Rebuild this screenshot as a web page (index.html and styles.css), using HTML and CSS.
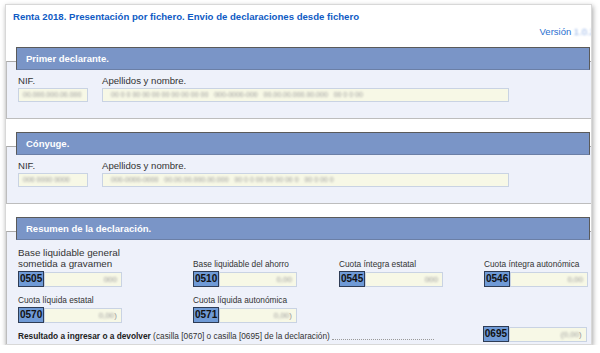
FILE: index.html
```html
<!DOCTYPE html>
<html lang="es">
<head>
    <meta charset="UTF-8">
    <title>Renta 2018. Presentación por fichero</title>
    <link rel="stylesheet" href="styles.css">
</head>
<body>
    <div class="marco">
        <div class="titulo">Renta 2018. Presentación por fichero. Envio de declaraciones desde fichero</div>
        <div class="version">Versión <span class="oculto">1.0.2</span></div>

        <div class="seccion">
            <div class="seccion-cab">Primer declarante.</div>
            <div class="seccion-cuerpo">
                <div class="fila-datos">
                    <div class="campo">
                        <label>NIF.</label>
                        <div class="caja caja-nif"><span class="oculto">00.000.000.00.000</span></div>
                    </div>
                    <div class="campo">
                        <label>Apellidos y nombre.</label>
                        <div class="caja caja-nombre"><span class="oculto">00 0 0 00 00 00 00 00 00 00 00 &nbsp; 000-0000-000 &nbsp; 00.00.00.000.00.000 &nbsp; 00 0 0 00</span></div>
                    </div>
                </div>
            </div>
        </div>

        <div class="seccion">
            <div class="seccion-cab">Cónyuge.</div>
            <div class="seccion-cuerpo">
                <div class="fila-datos">
                    <div class="campo">
                        <label>NIF.</label>
                        <div class="caja caja-nif"><span class="oculto">000 0000 0000</span></div>
                    </div>
                    <div class="campo">
                        <label>Apellidos y nombre.</label>
                        <div class="caja caja-nombre"><span class="oculto">000-0000-0000 &nbsp; 00.00.00.000.00.000 &nbsp; 00 0 0 00 00 00 00 0 &nbsp; 00 0 00 0</span></div>
                    </div>
                </div>
            </div>
        </div>

        <div class="seccion seccion-resumen">
            <div class="seccion-cab">Resumen de la declaración.</div>
            <div class="seccion-cuerpo">
                <div class="rejilla">
                    <div class="casilla">
                        <div class="etq etq-grande">Base liquidable general<br>sometida a gravamen</div>
                        <div class="importe"><span class="codigo">0505</span><span class="caja caja-imp"><span class="oculto">000</span></span></div>
                    </div>
                    <div class="casilla">
                        <div class="etq">Base liquidable del ahorro</div>
                        <div class="importe"><span class="codigo">0510</span><span class="caja caja-imp"><span class="oculto">0,00</span></span></div>
                    </div>
                    <div class="casilla">
                        <div class="etq">Cuota íntegra estatal</div>
                        <div class="importe"><span class="codigo">0545</span><span class="caja caja-imp"><span class="oculto">000</span></span></div>
                    </div>
                    <div class="casilla">
                        <div class="etq">Cuota íntegra autonómica</div>
                        <div class="importe"><span class="codigo">0546</span><span class="caja caja-imp"><span class="oculto">0,00</span></span></div>
                    </div>
                    <div class="casilla">
                        <div class="etq">Cuota líquida estatal</div>
                        <div class="importe"><span class="codigo">0570</span><span class="caja caja-imp"><span class="oculto">0,00</span>)</span></div>
                    </div>
                    <div class="casilla">
                        <div class="etq">Cuota líquida autonómica</div>
                        <div class="importe"><span class="codigo">0571</span><span class="caja caja-imp"><span class="oculto">0,00</span>)</span></div>
                    </div>
                </div>
                <div class="resultado">
                    <div class="resultado-texto"><b>Resultado a ingresar o a devolver</b> (casilla [0670] o casilla [0695] de la declaración)</div>
                    <div class="puntos"></div>
                    <div class="importe importe-final"><span class="codigo">0695</span><span class="caja caja-imp"><span class="oculto">(0,00</span>)</span></div>
                </div>
            </div>
        </div>
    </div>
</body>
</html>
```

FILE: styles.css
```css
* {
    margin: 0;
    padding: 0;
    box-sizing: border-box;
}

body {
    background: #fff;
    font-family: 'Liberation Sans', Arial, sans-serif;
    color: #333;
}

.marco {
    width: 587px;
    height: 341px;
    margin: 4px 0 0 5px;
    background: #fff;
    border: 1px solid #d8d8d8;
    box-shadow: 1px 2px 5px rgba(0, 0, 0, 0.35);
    overflow: hidden;
}

.titulo {
    color: #0f5bc4;
    font-weight: bold;
    font-size: 9.6px;
    padding: 6px 0 0 7px;
    height: 20px;
}

.version {
    color: #2a6fd0;
    font-size: 9.5px;
    text-align: right;
    margin-right: -4px;
    height: 16px;
    padding-top: 1px;
    white-space: nowrap;
}

.version .oculto {
    color: #8fb0e6;
}

.oculto {
    display: inline-block;
    color: #9a9a9a;
    filter: blur(0.8px);
}

/* Secciones */
.seccion {
    margin-top: 20px;
    border-top: 1px solid #a9a9a9;
    border-left: 1px solid #bdbdbd;
    border-bottom: 1px solid #bdbdbd;
    background: #eef1fa;
}

.seccion + .seccion {
    margin-top: 27px;
}

.seccion-cab {
    margin: -15px 1px 0 9px;
    height: 23px;
    background: #7a95c7;
    border: 1px solid #5a5a5a;
    border-bottom-color: #6b7fa6;
    color: #fff;
    font-weight: bold;
    font-size: 9.5px;
    line-height: 21px;
    padding-left: 9px;
}

.seccion-cuerpo {
    padding: 5px 0 16px 11px;
}

.fila-datos {
    display: flex;
    gap: 14px;
}

.campo label {
    display: block;
    font-size: 9.6px;
    line-height: 12px;
    height: 13px;
    color: #333;
}

.caja {
    display: block;
    height: 14px;
    background: #f7f8e6;
    border: 1px solid #c9d3e3;
    font-size: 7px;
    line-height: 12px;
    padding-left: 4px;
    overflow: hidden;
    white-space: nowrap;
}

.caja-nif {
    width: 70px;
}

.caja-nombre {
    width: 407px;
    padding-left: 8px;
}

/* Resumen */
.seccion-resumen .seccion-cuerpo {
    padding: 7px 0 3px 11px;
}

.rejilla {
    display: grid;
    grid-template-columns: 175px 146px 145px 105px;
    row-gap: 8px;
    align-items: end;
}

.etq {
    font-size: 8.3px;
    line-height: 11px;
    height: 12px;
    color: #333;
}

.etq-grande {
    font-size: 9.8px;
    line-height: 11px;
    height: 24px;
}

.importe {
    display: flex;
    height: 16px;
}

.codigo {
    width: 26px;
    height: 16px;
    background: #6f9ad6;
    border: 1px solid #2e3c55;
    color: #111;
    font-weight: bold;
    font-size: 10px;
    line-height: 14px;
    padding-left: 1px;
}

.caja-imp {
    width: 78px;
    height: 15px;
    margin-top: 1px;
    text-align: right;
    padding-right: 4px;
    font-size: 8px;
    color: #999;
    line-height: 13px;
}

.resultado {
    display: flex;
    align-items: flex-end;
    margin-top: 3px;
}

.resultado-texto {
    font-size: 8.3px;
    color: #333;
    white-space: nowrap;
    line-height: 11px;
}

.resultado-texto b {
    color: #222;
}

.puntos {
    width: 102px;
    border-bottom: 1px dotted #9a9a9a;
    margin: 0 0 2px 2px;
}

.importe-final {
    margin-left: 49px;
}
```
